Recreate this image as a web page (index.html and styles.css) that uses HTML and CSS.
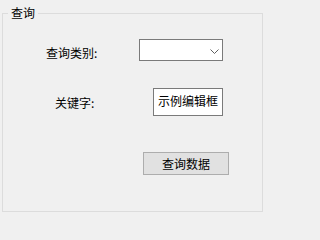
FILE: index.html
```html
<!DOCTYPE html>
<html lang="zh-CN">
<head>
<meta charset="utf-8">
<title>查询</title>
<link rel="stylesheet" href="styles.css">
</head>
<body>
<fieldset class="group">
  <legend class="group-title">查询</legend>
  <div class="row row-type">
    <label class="label label-type">查询类别:</label>
    <div class="combo">
      <svg class="chevron" width="9" height="5" viewBox="0 0 9 5"><polyline points="0.5,0.5 4.5,4.5 8.5,0.5" fill="none" stroke="#5f5f5f" stroke-width="1"/></svg>
    </div>
  </div>
  <div class="row row-key">
    <label class="label label-key">关键字:</label>
    <div class="edit">示例编辑框</div>
  </div>
  <div class="row row-btn">
    <button class="btn">查询数据</button>
  </div>
</fieldset>
</body>
</html>
```
FILE: styles.css
```css
html, body {
  margin: 0;
  padding: 0;
  background: #f0f0f0;
  width: 270px;
  height: 224px;
  overflow: hidden;
  font-family: "Noto Sans CJK SC", "Noto Sans", sans-serif;
  font-size: 12px;
  line-height: 14px;
  color: #000;
}
.group {
  box-sizing: border-box;
  width: 261px;
  margin: 6px 0 0 2px;
  padding: 0 0 36px 0;
  border: 1px solid #dcdcdc;
  min-width: 0;
}
.group-title {
  margin-left: 5px;
  padding: 0 3px;
  line-height: 14px;
}
.row {
  display: flex;
  align-items: flex-start;
}
.label {
  display: block;
  white-space: nowrap;
}
.row-type { margin-top: 19px; }
.label-type {
  margin: 7px 0 0 43px;
  width: 93px;
}
.combo {
  box-sizing: border-box;
  width: 84px;
  height: 22px;
  border: 1px solid #7a7a7a;
  background: #fff;
  display: flex;
  justify-content: flex-end;
  align-items: flex-start;
  padding: 9px 3px 0 0;
}
.chevron { display: block; }
.row-key { margin-top: 27px; }
.label-key {
  margin: 8px 0 0 52px;
  width: 98px;
}
.edit {
  box-sizing: border-box;
  width: 70px;
  height: 28px;
  border: 1px solid #7a7a7a;
  background: #fff;
  padding: 5px 0 0 4px;
  white-space: nowrap;
  overflow: hidden;
}
.row-btn { margin-top: 36px; }
.btn {
  box-sizing: border-box;
  margin: 0 0 0 140px;
  width: 86px;
  height: 23px;
  padding: 0;
  border: 1px solid #adadad;
  background: #e1e1e1;
  font: inherit;
  color: #000;
  line-height: 14px;
}
```
